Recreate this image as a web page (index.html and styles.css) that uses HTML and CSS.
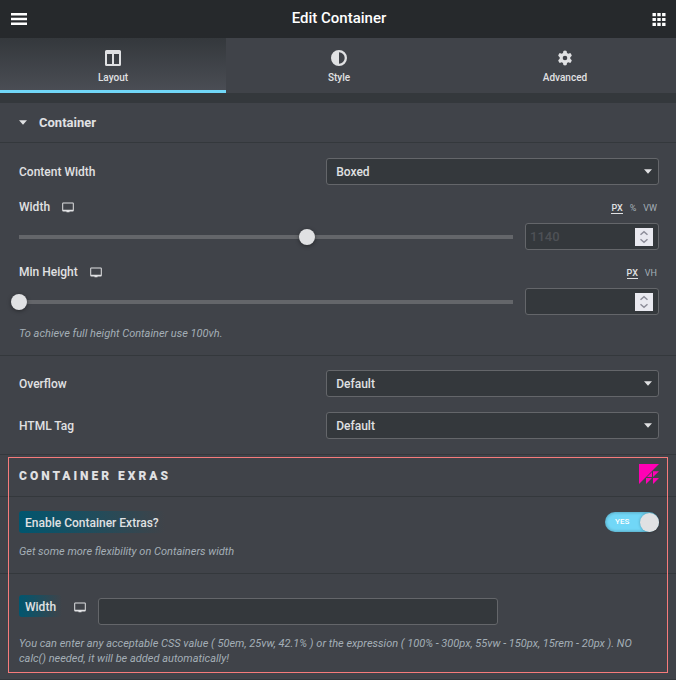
FILE: index.html
```html
<!DOCTYPE html>
<html lang="en">
<head>
<meta charset="utf-8">
<meta name="viewport" content="width=device-width, initial-scale=1">
<title>Edit Container</title>
<link rel="stylesheet" href="styles.css">
</head>
<body>
<svg class="sprite" aria-hidden="true">
  <symbol id="desktop" viewBox="0 0 12 11">
    <path fill-rule="evenodd" d="M1.200 .5h9.600a1 1 0 0 1 1 1v7a1 1 0 0 1-1 1H7.500v.8h-3v-.8H1.200a1 1 0 0 1-1-1v-7a1 1 0 0 1 1-1zM1.200 1.500v6.200h9.600V1.500z"/>
  </symbol>
  <symbol id="spin" viewBox="0 0 18 18">
    <path d="M5.500 6.800 9 3.700l3.500 3.100M5.500 11.200 9 14.300l3.500-3.100" fill="none" stroke="#8d8d99" stroke-width="1.500"/>
  </symbol>
</svg>

<header class="header">
  <button class="icon-button" type="button" aria-label="Menu">
    <svg width="16" height="12" viewBox="0 0 16 12"><path d="M0 0h16v2.500H0zM0 4.700h16v2.500H0zM0 9.400h16v2.500H0z"/></svg>
  </button>
  <h1 class="title">Edit Container</h1>
  <button class="icon-button" type="button" aria-label="Widgets">
    <svg width="14" height="13" viewBox="0 0 14 13"><path d="M.5 0h3.400v3.200H.5zM5.300 0h3.400v3.200H5.300zM10.100 0h3.400v3.200h-3.400zM.5 4.900h3.400v3.200H.5zM5.300 4.900h3.400v3.200H5.300zM10.100 4.900h3.400v3.200h-3.400zM.5 9.800h3.400V13H.5zM5.300 9.800h3.400V13H5.300zM10.100 9.800h3.400V13h-3.400z"/></svg>
  </button>
</header>

<nav class="tabs">
  <button class="tab tab-active" type="button">
    <svg width="16" height="16" viewBox="0 0 16 16"><path fill-rule="evenodd" d="M1.500 0h13A1.500 1.500 0 0 1 16 1.500v13a1.500 1.500 0 0 1-1.500 1.500h-13A1.500 1.500 0 0 1 0 14.500v-13A1.500 1.500 0 0 1 1.500 0zM2 4v10h5V4zM9 4v10h5V4z"/></svg>
    <span>Layout</span>
  </button>
  <button class="tab" type="button">
    <svg width="16" height="16" viewBox="0 0 16 16"><path fill-rule="evenodd" d="M8 0a8 8 0 1 1 0 16A8 8 0 0 1 8 0zM8 2.300v11.400A5.700 5.700 0 0 0 8 2.300z"/></svg>
    <span>Style</span>
  </button>
  <button class="tab" type="button">
    <svg width="16" height="16" viewBox="0 0 16 16"><path fill-rule="evenodd" d="M6.400.9Q8 .3 9.600.9L10 3l1.300.8 2-.7q1.100 1.200 1.500 2.700l-1.500 1.400v1.600l1.500 1.400q-.4 1.500-1.500 2.700l-2-.7L10 13l-.4 2.100q-1.600.6-3.200 0L6 13l-1.300-.8-2 .7Q1.600 11.700 1.200 10.200l1.500-1.400V7.200L1.200 5.800q.4-1.500 1.500-2.700l2 .7L6 3zM8 5.700a2.300 2.300 0 1 0 0 4.600 2.300 2.300 0 0 0 0-4.600z"/></svg>
    <span>Advanced</span>
  </button>
</nav>

<main>
  <section>
    <h2 class="section-title">
      <svg width="8" height="5" viewBox="0 0 8 5"><path d="M0 .2h8L4 4.800z"/></svg>
      Container
    </h2>
    <div class="group group-size">
      <div class="row">
        <label for="content-width">Content Width</label>
        <span class="select">
          <select id="content-width"><option>Boxed</option><option>Full Width</option></select>
          <svg width="8" height="5" viewBox="0 0 8 5"><path d="M0 .2h8L4 4.800z"/></svg>
        </span>
      </div>
      <div class="slider-head">
        <label for="width">Width</label>
        <svg class="device" width="12" height="11"><use href="#desktop"/></svg>
        <span class="units"><button class="unit unit-active" type="button">PX</button><button class="unit" type="button">%</button><button class="unit" type="button">VW</button></span>
      </div>
      <div class="slider-row">
        <span class="slider"><input type="range" aria-label="Width slider" min="0" max="494" value="288"></span>
        <span class="number"><input id="width" type="number" placeholder="1140"><svg width="18" height="18"><use href="#spin"/></svg></span>
      </div>
      <div class="slider-head">
        <label for="min-height">Min Height</label>
        <svg class="device" width="12" height="11"><use href="#desktop"/></svg>
        <span class="units"><button class="unit unit-active" type="button">PX</button><button class="unit" type="button">VH</button></span>
      </div>
      <div class="slider-row">
        <span class="slider"><input type="range" aria-label="Min height slider" min="0" max="100" value="0"></span>
        <span class="number"><input id="min-height" type="number"><svg width="18" height="18"><use href="#spin"/></svg></span>
      </div>
      <p class="description">To achieve full height Container use 100vh.</p>
    </div>
    <div class="group">
      <div class="row">
        <label for="overflow">Overflow</label>
        <span class="select">
          <select id="overflow"><option>Default</option><option>Hidden</option></select>
          <svg width="8" height="5" viewBox="0 0 8 5"><path d="M0 .2h8L4 4.800z"/></svg>
        </span>
      </div>
      <div class="row">
        <label for="html-tag">HTML Tag</label>
        <span class="select">
          <select id="html-tag"><option>Default</option><option>div</option></select>
          <svg width="8" height="5" viewBox="0 0 8 5"><path d="M0 .2h8L4 4.800z"/></svg>
        </span>
      </div>
    </div>
  </section>

  <section class="extras">
    <h2 class="extras-title">
      Container Exras
      <svg width="20" height="20" viewBox="0 0 20 20"><path d="M0 0h20L0 20zM13 8v5H8zM14 7.300h6l-6 5.700zM7 14h6l-6 6zM14 14h6l-6 6z"/></svg>
    </h2>
    <div class="group group-enable">
      <div class="row">
        <label class="tag" for="enable">Enable Container Extras?</label>
        <label class="switch"><input id="enable" type="checkbox" checked><span class="switch-text">YES</span><span class="switch-knob"></span></label>
      </div>
      <p class="description">Get some more flexibility on Containers width</p>
    </div>
    <div class="group group-width">
      <div class="width-row">
        <label class="tag" for="extra-width">Width</label>
        <svg class="device" width="12" height="11"><use href="#desktop"/></svg>
        <input class="text-input" id="extra-width" type="text">
      </div>
      <p class="description">You can enter any acceptable CSS value ( 50em, 25vw, 42.1% ) or the expression ( 100% - 300px, 55vw - 150px, 15rem - 20px ). NO calc() needed, it will be added automatically!</p>
    </div>
  </section>
</main>
</body>
</html>
```
FILE: styles.css
```css
* {
  box-sizing: border-box;
}

body {
  margin: 0;
  overflow-x: hidden;
  background: #404349;
  color: #e0e1e3;
  font: 500 12px/16px Roboto, "Liberation Sans", sans-serif;
}

button,
input,
select {
  margin: 0;
  color: inherit;
  font: inherit;
}

button {
  padding: 0;
  border: 0;
  background: none;
  cursor: pointer;
}

h1,
h2,
p {
  margin: 0;
}

svg {
  display: block;
  flex: none;
  fill: currentColor;
}

.sprite {
  position: absolute;
  width: 0;
  height: 0;
}

.header {
  display: flex;
  align-items: center;
  justify-content: space-between;
  height: 38px;
  padding: 0 8px 0 10px;
  background: #26292c;
  color: #fff;
}

.title {
  padding-bottom: 2px;
  font-size: 15px;
  font-weight: 500;
  line-height: 20px;
}

.icon-button {
  display: flex;
  align-items: center;
  justify-content: center;
  height: 36px;
  width: 18px;
}

.tabs {
  display: grid;
  grid-template-columns: repeat(3, 1fr);
  height: 65px;
  margin-right: -2px;
  border-bottom: 10px solid #34383c;
}

.tab {
  display: flex;
  flex-direction: column;
  align-items: center;
  gap: 5px;
  padding-top: 12px;
  border-bottom: 3px solid transparent;
  font-size: 10px;
  line-height: 14px;
}

.tab-active {
  border-bottom-color: #71d7f7;
  background: linear-gradient(#34383c, #4a4d54);
}

.section-title {
  display: flex;
  align-items: center;
  gap: 12px;
  height: 40px;
  padding: 0 19px;
  border-bottom: 1px solid #34383c;
  font-size: 13px;
  font-weight: 700;
}

.group {
  padding: 14px 17px 15px 19px;
  border-bottom: 1px solid #34383c;
}

.group-size {
  padding-top: 15px;
  padding-bottom: 14px;
}

.row {
  display: flex;
  align-items: center;
  justify-content: space-between;
}

.row + .row {
  margin-top: 15px;
}

.select {
  display: flex;
  align-items: center;
  width: 52%;
  height: 27px;
  padding-right: 6px;
  border: 1px solid #64666a;
  border-radius: 3px;
  background: #34383c;
}

.select select {
  flex: 1;
  height: 25px;
  margin-right: -8px;
  padding: 0 18px 0 9px;
  border: 0;
  background: none;
  appearance: none;
}

.select svg {
  pointer-events: none;
}

.slider-head {
  display: flex;
  align-items: center;
  height: 38px;
  padding-top: 6px;
}

.device {
  margin-left: 12px;
}

.units {
  display: flex;
  gap: 7px;
  margin-left: auto;
  padding: 3px 2px 0 0;
}

.unit {
  border-bottom: 1px solid transparent;
  color: #a4afb7;
  font-size: 9px;
  font-weight: 400;
  line-height: 9px;
}

.unit-active {
  border-bottom-color: #e0e1e3;
  color: #e0e1e3;
  font-weight: 500;
}

.slider-row {
  display: flex;
  align-items: center;
  gap: 12px;
}

.slider {
  flex: 1;
  display: flex;
  margin: 0 -8px;
}

.slider input {
  width: 100%;
  height: 16px;
  background: linear-gradient(#64666a, #64666a) center / calc(100% - 16px) 4px no-repeat;
  appearance: none;
}

.slider input::-webkit-slider-thumb {
  width: 16px;
  height: 16px;
  border-radius: 50%;
  background: #e0e1e3;
  box-shadow: 0 1px 4px rgba(0, 0, 0, 0.4);
  appearance: none;
}

.number {
  display: flex;
  align-items: center;
  width: 134px;
  height: 27px;
  padding: 0 5px 0 4px;
  border: 1px solid #64666a;
  border-radius: 3px;
  background: #34383c;
}

.number input {
  flex: 1;
  min-width: 0;
  padding: 0;
  border: 0;
  background: none;
  font-size: 13px;
  appearance: textfield;
}

.number input::placeholder {
  color: #4e5156;
}

.number svg {
  background: #e9e9f0;
}

.description {
  margin-top: 11px;
  color: #a4afb7;
  font-size: 11px;
  font-style: italic;
  font-weight: 400;
  line-height: 15px;
}

.extras {
  position: relative;
}

.extras::after {
  position: absolute;
  inset: 2px 8px 7px;
  border: 1px solid #f77b7b;
  content: "";
  pointer-events: none;
}

.extras-title {
  display: flex;
  align-items: center;
  justify-content: space-between;
  height: 42px;
  padding: 0 17px 0 19px;
  border-bottom: 1px solid #34383c;
  font-size: 12px;
  font-weight: 900;
  letter-spacing: 3px;
  text-transform: uppercase;
}

.extras-title svg {
  margin-bottom: 4px;
  color: #ff00b4;
}

.tag {
  padding: 4px 6px 2px;
  border-radius: 3px;
  background: linear-gradient(90deg, #00566f, #404349);
}

.switch {
  display: flex;
  align-items: center;
  justify-content: space-between;
  width: 54px;
  height: 20px;
  padding-left: 10px;
  border-radius: 10px;
  background: #71d7f7;
  box-shadow: inset 0 0 3px 1px rgba(0, 0, 0, 0.2);
  cursor: pointer;
}

.switch input {
  position: absolute;
  opacity: 0;
}

.switch-text {
  color: #fff;
  font-size: 8px;
}

.switch-knob {
  width: 19px;
  height: 19px;
  border-radius: 50%;
  background: #e0e1e3;
  box-shadow: 0 0 3px rgba(0, 0, 0, 0.3);
}

.group-enable {
  padding-bottom: 14px;
}

.group-width {
  padding-top: 21px;
  padding-bottom: 13px;
}

.width-row {
  display: flex;
  align-items: flex-start;
}

.width-row .device {
  margin: 7px 12px 0 18px;
}

.width-row .tag {
  margin-right: -6px;
}

.text-input {
  flex: 0 1 400px;
  min-width: 0;
  height: 27px;
  margin-top: 3px;
  padding: 0 5px;
  border: 1px solid #64666a;
  border-radius: 3px;
  background: #34383c;
}
```
